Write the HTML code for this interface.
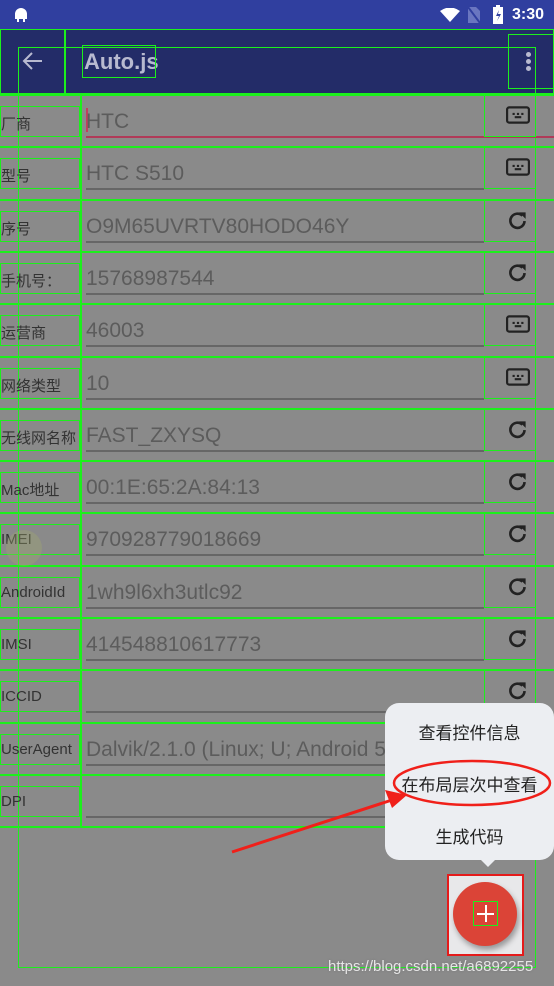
<!DOCTYPE html>
<html><head><meta charset="utf-8"><style>
*{margin:0;padding:0;box-sizing:border-box}
body{width:554px;height:986px;overflow:hidden;background:#8a8a8a;position:relative;font-family:"Liberation Sans","Noto Sans CJK SC",sans-serif}
.a{position:absolute}
.g{position:absolute;border:1.5px solid #1cf01c}
.row{position:absolute;left:0;width:554px;height:53px}
.row .hl{position:absolute;left:0;top:0;width:554px;height:1.5px;background:#1cf01c}
.row .lb{position:absolute;left:0;top:12px;width:80px;height:31px;border:1.5px solid #1cf01c}
.row .lt{position:absolute;left:1px;top:19px;font-size:15px;color:#333;white-space:nowrap}
.row .fv{position:absolute;left:86px;top:16px;font-size:21px;color:#5c5c5c;white-space:nowrap}
.row .ul{position:absolute;left:86px;top:42px;width:398px;height:2px;background:#666}
.row .ib{position:absolute;left:484px;top:0;width:52px;height:43px;border:1.5px solid #1cf01c}
.row svg{position:absolute;left:506px;top:10px}
</style></head><body>
<div class="a" style="left:0;top:0;width:554px;height:29px;background:#303f9f"></div>
<div class="a" style="left:0;top:29px;width:554px;height:65px;background:#232c68"></div>
<svg class="a" style="left:12px;top:6px" width="18" height="18" viewBox="0 0 18 18"><path d="M3 8a6 6 0 0 1 12 0v5h-2v3h-2v-3H7v3H5v-3H3z" fill="#fff"/></svg>
<svg class="a" style="left:440px;top:8px" width="20" height="14" viewBox="0 0 20 14"><path d="M0 3Q10-4 20 3L10 14z" fill="#fff"/></svg>
<svg class="a" style="left:468px;top:7px" width="12" height="16" viewBox="0 0 12 16"><path d="M0 0h8l4 4v12H0z" fill="#6a76c0"/><path d="M0 0L12 16" stroke="#303f9f" stroke-width="2"/></svg>
<svg class="a" style="left:493px;top:5px" width="10" height="19" viewBox="0 0 10 19"><path d="M3 0h4v2h3v17H0V2h3z" fill="#fff"/><path d="M6 5L3 11h3l-2 5 4-7H5z" fill="#303f9f"/></svg>
<div class="a" style="left:512px;top:6px;color:#fff;font-size:16px;font-weight:bold">3:30</div>
<svg class="a" style="left:22px;top:51px" width="22" height="20" viewBox="0 0 22 20"><path d="M20 10H3M10 2L2 10l8 8" stroke="#b8bad0" stroke-width="2" fill="none"/></svg>
<div class="a" style="left:84px;top:49px;font-size:22px;font-weight:bold;color:#b8bad0">Auto.js</div>
<div class="a" style="left:526px;top:52px;width:5px;height:5px;border-radius:50%;background:#b8bad0"></div>
<div class="a" style="left:526px;top:59px;width:5px;height:5px;border-radius:50%;background:#b8bad0"></div>
<div class="a" style="left:526px;top:66px;width:5px;height:5px;border-radius:50%;background:#b8bad0"></div>
<div class="g" style="left:0;top:29px;width:554px;height:65px"></div>
<div class="g" style="left:64px;top:29px;width:0;height:65px"></div>
<div class="g" style="left:82px;top:45px;width:74px;height:33px"></div>
<div class="g" style="left:508px;top:34px;width:46px;height:55px"></div>
<div class="g" style="left:18px;top:47px;width:518px;height:921px"></div>
<div class="g" style="left:80px;top:94px;width:0;height:733px"></div>

<div class="row" style="top:94px"><div class="hl"></div><div class="lb"></div><div class="lt">厂商</div><div class="a" style="left:86px;top:14px;width:2px;height:24px;background:#c2405e"></div><div class="fv">HTC</div><div class="ul" style="background:#b03a58;width:468px"></div><div class="ib"></div><svg width="24" height="22" viewBox="0 0 22 20"><rect x="1" y="3" width="20" height="14" rx="2" fill="none" stroke="#222" stroke-width="2"/><path d="M6 9h2M10 9h2M14 9h2M8 12h6" stroke="#222" stroke-width="2"/></svg></div>
<div class="row" style="top:146px"><div class="hl"></div><div class="lb"></div><div class="lt">型号</div><div class="fv">HTC S510</div><div class="ul"></div><div class="ib"></div><svg width="24" height="22" viewBox="0 0 22 20"><rect x="1" y="3" width="20" height="14" rx="2" fill="none" stroke="#222" stroke-width="2"/><path d="M6 9h2M10 9h2M14 9h2M8 12h6" stroke="#222" stroke-width="2"/></svg></div>
<div class="row" style="top:199px"><div class="hl"></div><div class="lb"></div><div class="lt">序号</div><div class="fv">O9M65UVRTV80HODO46Y</div><div class="ul"></div><div class="ib"></div><svg width="24" height="22" viewBox="0 0 22 20"><path d="M17 11a6.5 6.5 0 1 1-2-5" fill="none" stroke="#222" stroke-width="2.4"/><path d="M12 3h6v6z" fill="#222"/></svg></div>
<div class="row" style="top:251px"><div class="hl"></div><div class="lb"></div><div class="lt">手机号：</div><div class="fv">15768987544</div><div class="ul"></div><div class="ib"></div><svg width="24" height="22" viewBox="0 0 22 20"><path d="M17 11a6.5 6.5 0 1 1-2-5" fill="none" stroke="#222" stroke-width="2.4"/><path d="M12 3h6v6z" fill="#222"/></svg></div>
<div class="row" style="top:303px"><div class="hl"></div><div class="lb"></div><div class="lt">运营商</div><div class="fv">46003</div><div class="ul"></div><div class="ib"></div><svg width="24" height="22" viewBox="0 0 22 20"><rect x="1" y="3" width="20" height="14" rx="2" fill="none" stroke="#222" stroke-width="2"/><path d="M6 9h2M10 9h2M14 9h2M8 12h6" stroke="#222" stroke-width="2"/></svg></div>
<div class="row" style="top:356px"><div class="hl"></div><div class="lb"></div><div class="lt">网络类型</div><div class="fv">10</div><div class="ul"></div><div class="ib"></div><svg width="24" height="22" viewBox="0 0 22 20"><rect x="1" y="3" width="20" height="14" rx="2" fill="none" stroke="#222" stroke-width="2"/><path d="M6 9h2M10 9h2M14 9h2M8 12h6" stroke="#222" stroke-width="2"/></svg></div>
<div class="row" style="top:408px"><div class="hl"></div><div class="lb"></div><div class="lt">无线网名称</div><div class="fv">FAST_ZXYSQ</div><div class="ul"></div><div class="ib"></div><svg width="24" height="22" viewBox="0 0 22 20"><path d="M17 11a6.5 6.5 0 1 1-2-5" fill="none" stroke="#222" stroke-width="2.4"/><path d="M12 3h6v6z" fill="#222"/></svg></div>
<div class="row" style="top:460px"><div class="hl"></div><div class="lb"></div><div class="lt">Mac地址</div><div class="fv">00:1E:65:2A:84:13</div><div class="ul"></div><div class="ib"></div><svg width="24" height="22" viewBox="0 0 22 20"><path d="M17 11a6.5 6.5 0 1 1-2-5" fill="none" stroke="#222" stroke-width="2.4"/><path d="M12 3h6v6z" fill="#222"/></svg></div>
<div class="row" style="top:512px"><div class="hl"></div><div class="lb"></div><div class="lt">IMEI</div><div class="fv">970928779018669</div><div class="ul"></div><div class="ib"></div><svg width="24" height="22" viewBox="0 0 22 20"><path d="M17 11a6.5 6.5 0 1 1-2-5" fill="none" stroke="#222" stroke-width="2.4"/><path d="M12 3h6v6z" fill="#222"/></svg></div>
<div class="row" style="top:565px"><div class="hl"></div><div class="lb"></div><div class="lt">AndroidId</div><div class="fv">1wh9l6xh3utlc92</div><div class="ul"></div><div class="ib"></div><svg width="24" height="22" viewBox="0 0 22 20"><path d="M17 11a6.5 6.5 0 1 1-2-5" fill="none" stroke="#222" stroke-width="2.4"/><path d="M12 3h6v6z" fill="#222"/></svg></div>
<div class="row" style="top:617px"><div class="hl"></div><div class="lb"></div><div class="lt">IMSI</div><div class="fv">414548810617773</div><div class="ul"></div><div class="ib"></div><svg width="24" height="22" viewBox="0 0 22 20"><path d="M17 11a6.5 6.5 0 1 1-2-5" fill="none" stroke="#222" stroke-width="2.4"/><path d="M12 3h6v6z" fill="#222"/></svg></div>
<div class="row" style="top:669px"><div class="hl"></div><div class="lb"></div><div class="lt">ICCID</div><div class="fv"></div><div class="ul"></div><div class="ib"></div><svg width="24" height="22" viewBox="0 0 22 20"><path d="M17 11a6.5 6.5 0 1 1-2-5" fill="none" stroke="#222" stroke-width="2.4"/><path d="M12 3h6v6z" fill="#222"/></svg></div>
<div class="row" style="top:722px"><div class="hl"></div><div class="lb"></div><div class="lt">UserAgent</div><div class="fv">Dalvik/2.1.0 (Linux; U; Android 5.1.1; HTC HTC S51</div><div class="ul"></div><div class="ib"></div><svg width="24" height="22" viewBox="0 0 22 20"><path d="M17 11a6.5 6.5 0 1 1-2-5" fill="none" stroke="#222" stroke-width="2.4"/><path d="M12 3h6v6z" fill="#222"/></svg></div>
<div class="row" style="top:774px"><div class="hl"></div><div class="lb"></div><div class="lt">DPI</div><div class="fv"></div><div class="ul"></div></div>
<div class="g" style="left:0;top:826px;width:554px;height:0"></div>

<div class="a" style="left:6px;top:530px;width:36px;height:36px;border-radius:50%;background:rgba(160,170,110,.35)"></div>

<div class="a" style="left:385px;top:703px;width:169px;height:157px;border-radius:14px;background:#eceef2"></div>
<div class="a" style="left:480px;top:859px;width:0;height:0;border-left:8px solid transparent;border-right:8px solid transparent;border-top:8px solid #eceef2"></div>
<div class="a" style="left:385px;top:719px;width:169px;text-align:center;font-size:17px;color:#222">查看控件信息</div>
<div class="a" style="left:385px;top:771px;width:169px;text-align:center;font-size:17px;color:#222">在布局层次中查看</div>
<div class="a" style="left:385px;top:823px;width:169px;text-align:center;font-size:17px;color:#222">生成代码</div>
<svg class="a" style="left:0;top:0" width="554" height="986" viewBox="0 0 554 986">
<ellipse cx="472" cy="783" rx="78" ry="22" fill="none" stroke="#f0201a" stroke-width="2.5"/>
<path d="M232 852L392 800" stroke="#f0201a" stroke-width="3"/>
<path d="M407 795L385 790L392 808z" fill="#f0201a"/>
</svg>

<div class="a" style="left:447px;top:874px;width:77px;height:82px;background:#e8e8ea;border:2px solid #e51b1b"></div>
<div class="a" style="left:453px;top:882px;width:64px;height:64px;border-radius:50%;background:#db4437;box-shadow:2px 4px 6px rgba(0,0,0,.35)"></div>
<div class="g" style="left:473px;top:901px;width:25px;height:25px"></div>
<div class="a" style="left:477px;top:913px;width:17px;height:2px;background:#fff"></div>
<div class="a" style="left:484.5px;top:905px;width:2px;height:17px;background:#fff"></div>
<div class="a" style="left:328px;top:958px;font-size:15px;color:#e6e6e6;text-shadow:0 0 2px #777">https://blog.csdn.net/a6892255</div>
</body></html>
